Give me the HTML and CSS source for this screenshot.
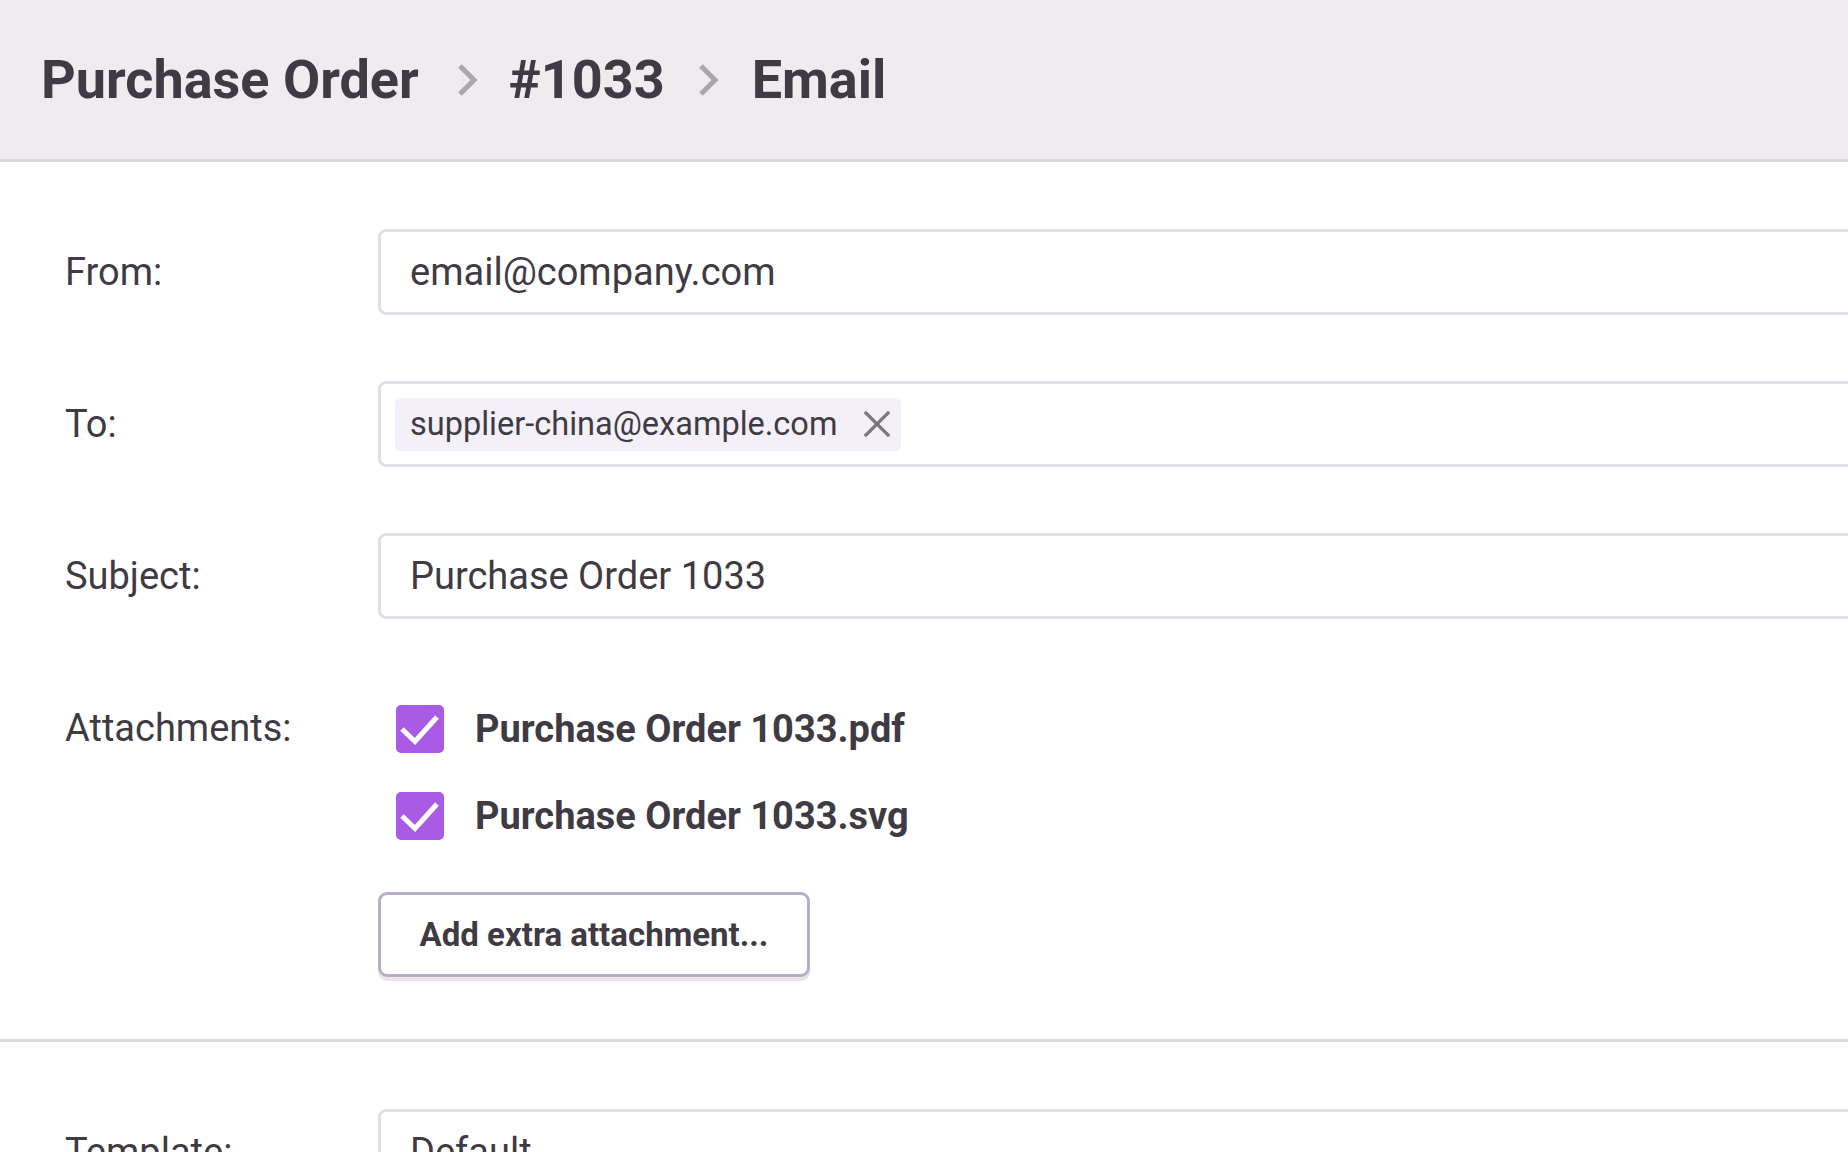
FILE: index.html
```html
<!DOCTYPE html>
<html lang="en">
<head>
<meta charset="utf-8">
<title>Purchase Order #1033 – Email</title>
<link rel="stylesheet" href="styles.css">
</head>
<body>
<header class="topbar">
  <nav class="crumbs">
    <span class="crumb">Purchase Order</span>
    <svg class="chev chev-first" viewBox="0 0 24 36" width="24" height="36"><path d="M5 4 L19 18 L5 32" fill="none" stroke="#a9a7ab" stroke-width="5"/></svg>
    <span class="crumb">#1033</span>
    <svg class="chev chev-second" viewBox="0 0 24 36" width="24" height="36"><path d="M5 4 L19 18 L5 32" fill="none" stroke="#a9a7ab" stroke-width="5"/></svg>
    <span class="crumb">Email</span>
  </nav>
</header>
<main>
  <section class="form-section">
    <div class="row">
      <div class="label">From:</div>
      <div class="field"><span class="value">email@company.com</span></div>
    </div>
    <div class="row">
      <div class="label">To:</div>
      <div class="field field-chips">
        <span class="chip">supplier-china@example.com
          <svg class="chip-x" viewBox="0 0 30 30" width="30" height="30"><path d="M2 2 L28 28 M28 2 L2 28" stroke="#7b777e" stroke-width="3.6" fill="none"/></svg>
        </span>
      </div>
    </div>
    <div class="row">
      <div class="label">Subject:</div>
      <div class="field"><span class="value">Purchase Order 1033</span></div>
    </div>
    <div class="row row-top">
      <div class="label">Attachments:</div>
      <div class="attachments">
        <div class="attach">
          <span class="check"><svg viewBox="0 0 48 48" width="48" height="48"><path d="M6 24 L19 36.5 L41 12" fill="none" stroke="#fff" stroke-width="5"/></svg></span>
          <span class="attach-name">Purchase Order 1033.pdf</span>
        </div>
        <div class="attach">
          <span class="check"><svg viewBox="0 0 48 48" width="48" height="48"><path d="M6 24 L19 36.5 L41 12" fill="none" stroke="#fff" stroke-width="5"/></svg></span>
          <span class="attach-name">Purchase Order 1033.svg</span>
        </div>
        <button class="btn" type="button">Add extra attachment...</button>
      </div>
    </div>
  </section>
  <section class="form-section form-section-last">
    <div class="row">
      <div class="label">Template:</div>
      <div class="field"><span class="value">Default</span></div>
    </div>
  </section>
</main>
</body>
</html>
```

FILE: styles.css
```css
html, body {
  margin: 0;
  padding: 0;
  overflow: hidden;
}

body {
  width: 1848px;
  height: 1152px;
  background: #ffffff;
  color: #3f3b44;
  font-family: Roboto, "Noto Sans", sans-serif;
}

.topbar {
  height: 159px;
  background: #eeecef;
  border-bottom: 3px solid #d9d5dd;
  display: flex;
  align-items: center;
  padding-left: 41px;
}

.crumbs {
  display: flex;
  align-items: center;
  font-size: 54px;
  font-weight: 700;
  color: #3f3b44;
  white-space: nowrap;
}

.chev {
  display: block;
}

.chev-first {
  margin: 0 30px 0 36px;
}

.chev-second {
  margin: 0 32px 0 31px;
}

.form-section {
  padding: 67px 0 62px;
  border-bottom: 3px solid #dcd8e0;
  display: flex;
  flex-direction: column;
  gap: 66px;
}

.form-section-last {
  border-bottom: none;
}

.row {
  display: grid;
  grid-template-columns: 378px 1500px;
  align-items: center;
}

.row-top {
  align-items: start;
}

.label {
  height: 86px;
  display: flex;
  align-items: center;
  padding-left: 65px;
  font-size: 38px;
  color: #3f3b44;
}

.field {
  box-sizing: border-box;
  height: 86px;
  border: 3px solid #e1dfe5;
  border-radius: 8px;
  display: flex;
  align-items: center;
  padding: 0 29px;
  font-size: 38px;
  color: #3f3b44;
  background: #fff;
}

.field-chips {
  padding: 0 14px;
}

.chip {
  display: inline-flex;
  align-items: center;
  gap: 26px;
  height: 53px;
  padding: 0 10px 0 15px;
  border-radius: 6px;
  background: #f4f0f7;
  font-size: 32.5px;
  color: #3f3b44;
}

.chip-x {
  display: block;
  width: 28px;
  height: 28px;
}

.attachments {
  display: flex;
  flex-direction: column;
  align-items: flex-start;
}

.attach {
  height: 87px;
  display: flex;
  align-items: center;
  gap: 31px;
  padding-left: 18px;
}

.check {
  width: 48px;
  height: 48px;
  border-radius: 5px;
  background: #a95be5;
  display: block;
}

.check svg {
  display: block;
}

.attach-name {
  font-size: 38px;
  font-weight: 700;
  color: #3f3b44;
}

.btn {
  margin-top: 33px;
  box-sizing: border-box;
  width: 432px;
  height: 85px;
  border: 3px solid #b9adc5;
  border-radius: 9px;
  background: #ffffff;
  box-shadow: 0 4px 0 #e8e6ea;
  font-family: Roboto, "Noto Sans", sans-serif;
  font-size: 33px;
  font-weight: 700;
  color: #3f3b44;
  padding: 0;
}
```
